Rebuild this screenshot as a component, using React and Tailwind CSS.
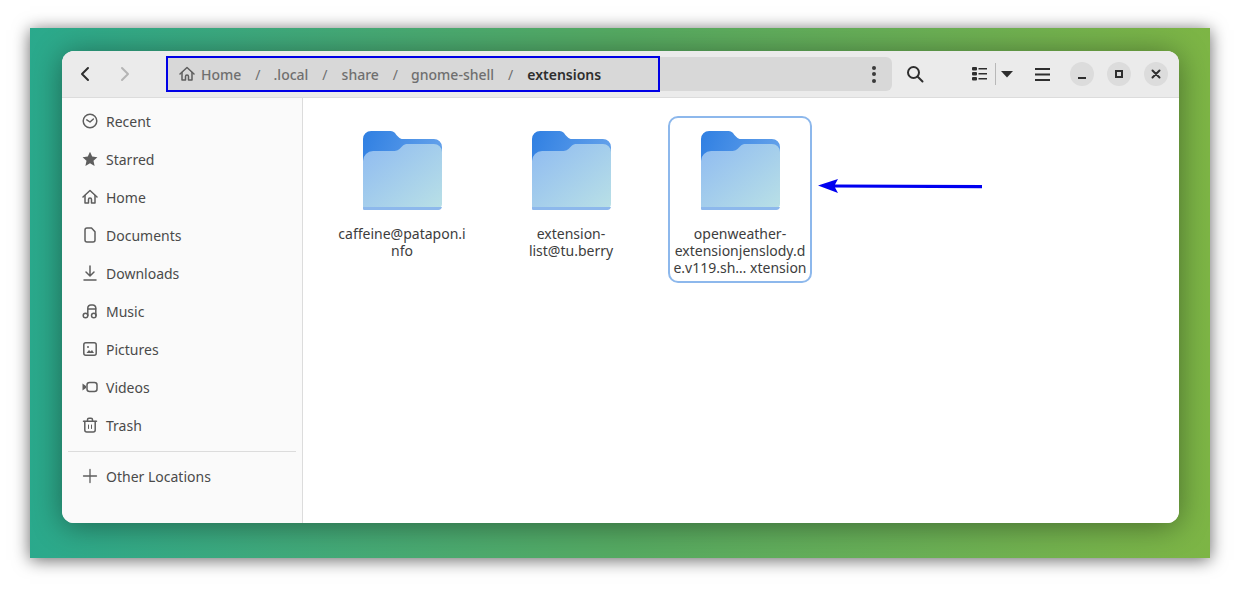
import React from "react";

const FONT = { fontFamily: '"Noto Sans", sans-serif' };

function FolderIcon() {
  return (
    <svg width="81" height="80" viewBox="0 0 80 80" preserveAspectRatio="none">
      <defs>
        <linearGradient id="back" x1="0" y1="0" x2="1" y2="0.25">
          <stop offset="0" stopColor="#2f7fe2" />
          <stop offset="1" stopColor="#62a0ea" />
        </linearGradient>
        <linearGradient id="front" x1="0" y1="0" x2="1" y2="1">
          <stop offset="0" stopColor="#8fbbf1" />
          <stop offset="1" stopColor="#b9e0e6" />
        </linearGradient>
      </defs>
      <path d="M1 9a8 8 0 0 1 8-8h18c4 0 5 1 7 4l2 2c1.500 1.500 2.500 2 4.500 2H71a8 8 0 0 1 8 8v30H1z" fill="url(#back)" />
      <path d="M1 31a10 10 0 0 1 10-10h20c4 0 5-1 7-3l2-2c1.500-1.500 3-2 5-2h26a8 8 0 0 1 8 8v52a4 4 0 0 1-4 4H1z" fill="url(#front)" />
      <path d="M1 77h78v0a4 4 0 0 1-4 3H2a1 1 0 0 1-1-1z" fill="#8db8ec" />
    </svg>
  );
}

function Glyph({ children, className = "", size = 16 }) {
  return (
    <svg width={size} height={size} viewBox="0 0 16 16" fill="none" stroke="#5e5e5e" strokeWidth="1.500" strokeLinecap="round" strokeLinejoin="round" className={className}>
      {children}
    </svg>
  );
}

const icons = {
  recent: (
    <>
      <circle cx="8" cy="8" r="6.800" />
      <path d="M4.800 6.800 8 9l3.400-3" />
    </>
  ),
  starred: <path d="M8 .800l2.200 4.800 5.200.6-3.900 3.500 1.100 5.200L8 12.300l-4.600 2.600 1.100-5.200L.6 6.200l5.200-.6z" fill="#5e5e5e" stroke="none" />,
  home: (
    <>
      <path d="M1 8 8 1.500 15 8" />
      <path d="M3 6.500V14h3.500v-3.500a1.500 1.500 0 0 1 3 0V14H13V6.500" />
    </>
  ),
  documents: <path d="M3 3a2 2 0 0 1 2-2h4.500L13 4.800V13a2 2 0 0 1-2 2H5a2 2 0 0 1-2-2z" />,
  downloads: (
    <>
      <path d="M8 1v9.500M4 7l4 4 4-4" />
      <path d="M2 15h12" />
    </>
  ),
  music: (
    <>
      <circle cx="3.500" cy="12.500" r="2.300" />
      <circle cx="11.800" cy="12.500" r="2.300" />
      <path d="M5.800 12.500V5a3 3 0 0 1 3-3h2a3 3 0 0 1 3 3v7.500M5.800 6h8.300" />
    </>
  ),
  pictures: (
    <>
      <rect x="1.800" y="1.800" width="12.400" height="12.400" rx="2" />
      <path d="M4.500 12 7 9l1.500 1.500L10 9l2 3z" fill="#5e5e5e" stroke="none" />
      <circle cx="6" cy="6" r="1" fill="#5e5e5e" stroke="none" />
    </>
  ),
  videos: (
    <>
      <rect x="5" y="3.500" width="10" height="9" rx="2.500" />
      <path d="M.5 4.500 4 7v2l-3.500 2.500z" fill="#5e5e5e" stroke="none" />
    </>
  ),
  trash: (
    <>
      <path d="M1.500 4.200h13M5.500 4V2.800a1.500 1.500 0 0 1 1.500-1.500h2a1.500 1.500 0 0 1 1.500 1.500V4" />
      <path d="M2.800 4.500v8.500a2 2 0 0 0 2 2h6.400a2 2 0 0 0 2-2V4.500" />
      <path d="M6.500 8v3.500M9.500 8v3.500" strokeWidth="1" />
    </>
  ),
  other: <path d="M8 1.500v13M1.500 8h13" strokeWidth="1.300" />,
};

const places = [
  ["Recent", "recent"],
  ["Starred", "starred"],
  ["Home", "home"],
  ["Documents", "documents"],
  ["Downloads", "downloads"],
  ["Music", "music"],
  ["Pictures", "pictures"],
  ["Videos", "videos"],
  ["Trash", "trash"],
];

function SidebarRow({ label, icon }) {
  return (
    <div className="flex h-[38px] items-center gap-[8px] pl-[20px] text-[14px] text-[#4a4a4a]">
      <Glyph>{icons[icon]}</Glyph>
      <span>{label}</span>
    </div>
  );
}

function FileItem({ lines, selected }) {
  return (
    <div className={`flex w-[144px] h-[167px] flex-col items-center rounded-[10px] pt-[12px] ${selected ? "border-2 border-[#8db8ec]" : "border-2 border-transparent"}`}>
      <FolderIcon />
      <div className="mt-[15px] text-center text-[14px] leading-[17px] text-[#3d3d3d] whitespace-nowrap">
        {lines.map((line) => (
          <div key={line}>{line}</div>
        ))}
      </div>
    </div>
  );
}

function RoundButton({ children }) {
  return <div className="flex h-[24px] w-[24px] items-center justify-center rounded-full bg-[#dcdcdc]">{children}</div>;
}

function Crumb({ children, bold }) {
  return <span className={bold ? "font-semibold text-[#2e2e2e]" : "font-medium text-[#6f6f6f]"}>{children}</span>;
}

function Slash() {
  return <span className="text-[#6f6f6f]">/</span>;
}

export default function App() {
  return (
    <div className="relative h-[590px] w-[1240px] overflow-hidden bg-white pl-[30px] pt-[28px]" style={FONT}>
      <div className="h-[530px] w-[1180px] bg-gradient-to-r from-[#2aa98c] via-[#55aa62] to-[#7db545] pl-[32px] pt-[23px] shadow-[0_2px_16px_rgba(0,0,0,0.6)]">
        <div className="flex h-[472px] w-[1117px] flex-col overflow-hidden rounded-[12px] bg-white shadow-[0_3px_30px_rgba(0,0,0,0.4)]">
          {/* header bar */}
          <div className="flex h-[47px] shrink-0 items-center border-b border-[#dcdcdc] bg-[#ebebeb] pl-[14px] pr-[11px]">
            <svg width="18" height="18" viewBox="0 0 18 18" fill="none" stroke="#2e2e2e" strokeWidth="2" strokeLinecap="round" strokeLinejoin="round">
              <path d="M12 3 6 9l6 6" />
            </svg>
            <svg width="18" height="18" viewBox="0 0 18 18" fill="none" stroke="#b4b4b4" strokeWidth="2" strokeLinecap="round" strokeLinejoin="round" className="ml-[22px]">
              <path d="m6 3 6 6-6 6" />
            </svg>
            <div className="ml-[32px] flex h-[34px] w-[726px] items-center rounded-r-[6px] bg-[#d8d8d8] pl-[13px] pr-[16px] text-[14px]">
              <Glyph size={16}>{icons.home}</Glyph>
              <span className="ml-[6px]"><Crumb>Home</Crumb></span>
              <span className="ml-[14px]"><Slash /></span>
              <span className="ml-[13px]"><Crumb>.local</Crumb></span>
              <span className="ml-[14px]"><Slash /></span>
              <span className="ml-[14px]"><Crumb>share</Crumb></span>
              <span className="ml-[14px]"><Slash /></span>
              <span className="ml-[13px]"><Crumb>gnome-shell</Crumb></span>
              <span className="ml-[14px]"><Slash /></span>
              <span className="ml-[14px]"><Crumb bold>extensions</Crumb></span>
              <div className="ml-auto flex flex-col gap-[2.500px]">
                <div className="h-[4px] w-[4px] rounded-full bg-[#3a3a3a]" />
                <div className="h-[4px] w-[4px] rounded-full bg-[#3a3a3a]" />
                <div className="h-[4px] w-[4px] rounded-full bg-[#3a3a3a]" />
              </div>
            </div>
            <svg width="18" height="18" viewBox="0 0 18 18" fill="none" stroke="#2e2e2e" strokeWidth="2" strokeLinecap="round" className="ml-[14px]">
              <circle cx="7.500" cy="7.500" r="5.500" />
              <path d="m12 12 4.500 4.500" />
            </svg>
            <svg width="16" height="14" viewBox="0 0 16 14" fill="#2e2e2e" className="ml-[48px]">
              <rect x="0" y="0" width="5" height="3.500" rx="1" />
              <rect x="0" y="5" width="5" height="3.500" rx="1" />
              <rect x="0" y="10" width="5" height="3.500" rx="1" />
              <rect x="6.500" y="1" width="8.500" height="1.500" />
              <rect x="6.500" y="6" width="8.500" height="1.500" />
              <rect x="6.500" y="11" width="8.500" height="1.500" />
            </svg>
            <div className="ml-[7px] h-[22px] w-px bg-[#b8b8b8]" />
            <svg width="12" height="7" viewBox="0 0 12 7" fill="#2e2e2e" className="ml-[5px]">
              <path d="M0 0h12L6 6.500z" />
            </svg>
            <svg width="15" height="13" viewBox="0 0 15 13" fill="#2e2e2e" className="ml-[22px]">
              <rect width="15" height="2" />
              <rect y="5.500" width="15" height="2" />
              <rect y="11" width="15" height="2" />
            </svg>
            <div className="ml-[20px] flex items-center gap-[13px]">
              <RoundButton>
                <div className="mt-[7px] h-[2px] w-[8px] bg-[#2e2e2e]" />
              </RoundButton>
              <RoundButton>
                <div className="h-[8px] w-[8px] border-2 border-[#2e2e2e]" />
              </RoundButton>
              <RoundButton>
                <svg width="10" height="10" viewBox="0 0 10 10" stroke="#2e2e2e" strokeWidth="2" strokeLinecap="round">
                  <path d="m1.500 1.500 7 7M8.500 1.500l-7 7" />
                </svg>
              </RoundButton>
            </div>
          </div>

          <div className="flex min-h-0 flex-1">
            {/* sidebar */}
            <div className="w-[241px] shrink-0 border-r border-[#dcdcdc] bg-[#fafafa] pt-[4px]">
              {places.map(([label, icon]) => (
                <SidebarRow key={label} label={label} icon={icon} />
              ))}
              <div className="mx-[6px] mt-[7px] h-px bg-[#dcdcdc]" />
              <div className="mt-[5px]">
                <SidebarRow label="Other Locations" icon="other" />
              </div>
            </div>

            {/* file grid */}
            <div className="flex flex-1 items-start gap-[25px] bg-white pl-[27px] pt-[18px]">
              <FileItem lines={["caffeine@patapon.i", "nfo"]} />
              <FileItem lines={["extension-", "list@tu.berry"]} />
              <FileItem selected lines={["openweather-", "extensionjenslody.d", "e.v119.sh… xtension"]} />
            </div>
          </div>
        </div>
      </div>

      {/* annotations */}
      <div className="absolute left-[166px] top-[56px] h-[36px] w-[494px] border-2 border-[#0000e6]" />
      <svg width="170" height="20" viewBox="0 0 170 20" className="absolute left-[816px] top-[176px]">
        <path d="M2 9.500 22 3 19 8.500 166 9v3.200L19 11.500l3 5.500z" fill="#0000f0" />
      </svg>
    </div>
  );
}
